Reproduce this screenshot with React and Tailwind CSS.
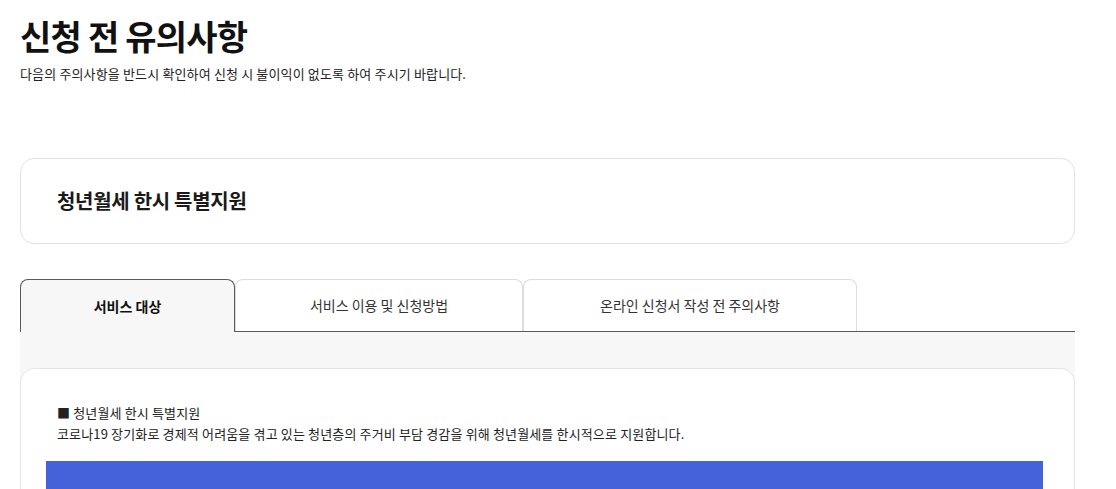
import React, { useState } from 'react';

const tabs = [
  { label: '서비스 대상', w: 'w-[215px]' },
  { label: '서비스 이용 및 신청방법', w: 'w-[288px]' },
  { label: '온라인 신청서 작성 전 주의사항', w: 'w-[334px]' },
];

const App = () => {
  const [active, setActive] = useState(0);

  return (
    <div
      className="min-h-screen bg-white text-[#111]"
      style={{ fontFamily: '"Noto Sans CJK KR", "Noto Sans", sans-serif' }}
    >
      <div className="ml-[20px] w-[1055px] pt-[16px]">
        {/* Header */}
        <h1 className="text-[34px] leading-[40px] font-bold tracking-[-0.8px]">신청 전 유의사항</h1>
        <p className="mt-[9px] text-[13px] leading-[18px] tracking-[0.15px] text-[#222]">
          다음의 주의사항을 반드시 확인하여 신청 시 불이익이 없도록 하여 주시기 바랍니다.
        </p>

        {/* Service title card */}
        <div className="mt-[75px] h-[86px] border border-[#e2e2e2] rounded-[14px] flex items-center px-[36px]">
          <h2 className="text-[20px] font-bold tracking-[-0.3px] text-[#1a1a1a]">청년월세 한시 특별지원</h2>
        </div>

        {/* Tabs */}
        <div className="mt-[35px] flex h-[53px]">
          {tabs.map((t, i) =>
            i === active ? (
              <button
                key={t.label}
                onClick={() => setActive(i)}
                className={`${t.w} h-full border border-b-0 border-[#5a5a5a] rounded-t-[8px] bg-[#f7f7f7] text-[14px] font-bold text-[#111]`}
              >
                {t.label}
              </button>
            ) : (
              <button
                key={t.label}
                onClick={() => setActive(i)}
                className={`${t.w} h-full flex flex-col`}
              >
                <span className="flex-1 w-full flex items-center justify-center border border-b-0 border-[#dcdcdc] rounded-t-[8px] bg-white text-[14px] text-[#333]">
                  {t.label}
                </span>
                <span className="w-full h-px bg-[#5a5a5a]" />
              </button>
            )
          )}
          <div className="flex-1 border-b border-[#5a5a5a]" />
        </div>

        {/* Content */}
        <div className="bg-[#f7f7f7] pt-[36px]">
          <div className="bg-white border border-[#e4e4e4] rounded-[14px] pt-[33px] pl-[25px] pr-[31px] h-[140px]">
            <div className="pl-[11px] text-[13px] leading-[21px] tracking-[0.15px] text-[#222]">
              <p>■ 청년월세 한시 특별지원</p>
              <p>코로나19 장기화로 경제적 어려움을 겪고 있는 청년층의 주거비 부담 경감을 위해 청년월세를 한시적으로 지원합니다.</p>
            </div>
            <div className="mt-[17px] h-[60px] bg-[#4562db]" />
          </div>
        </div>
      </div>
    </div>
  );
};

export default App;
